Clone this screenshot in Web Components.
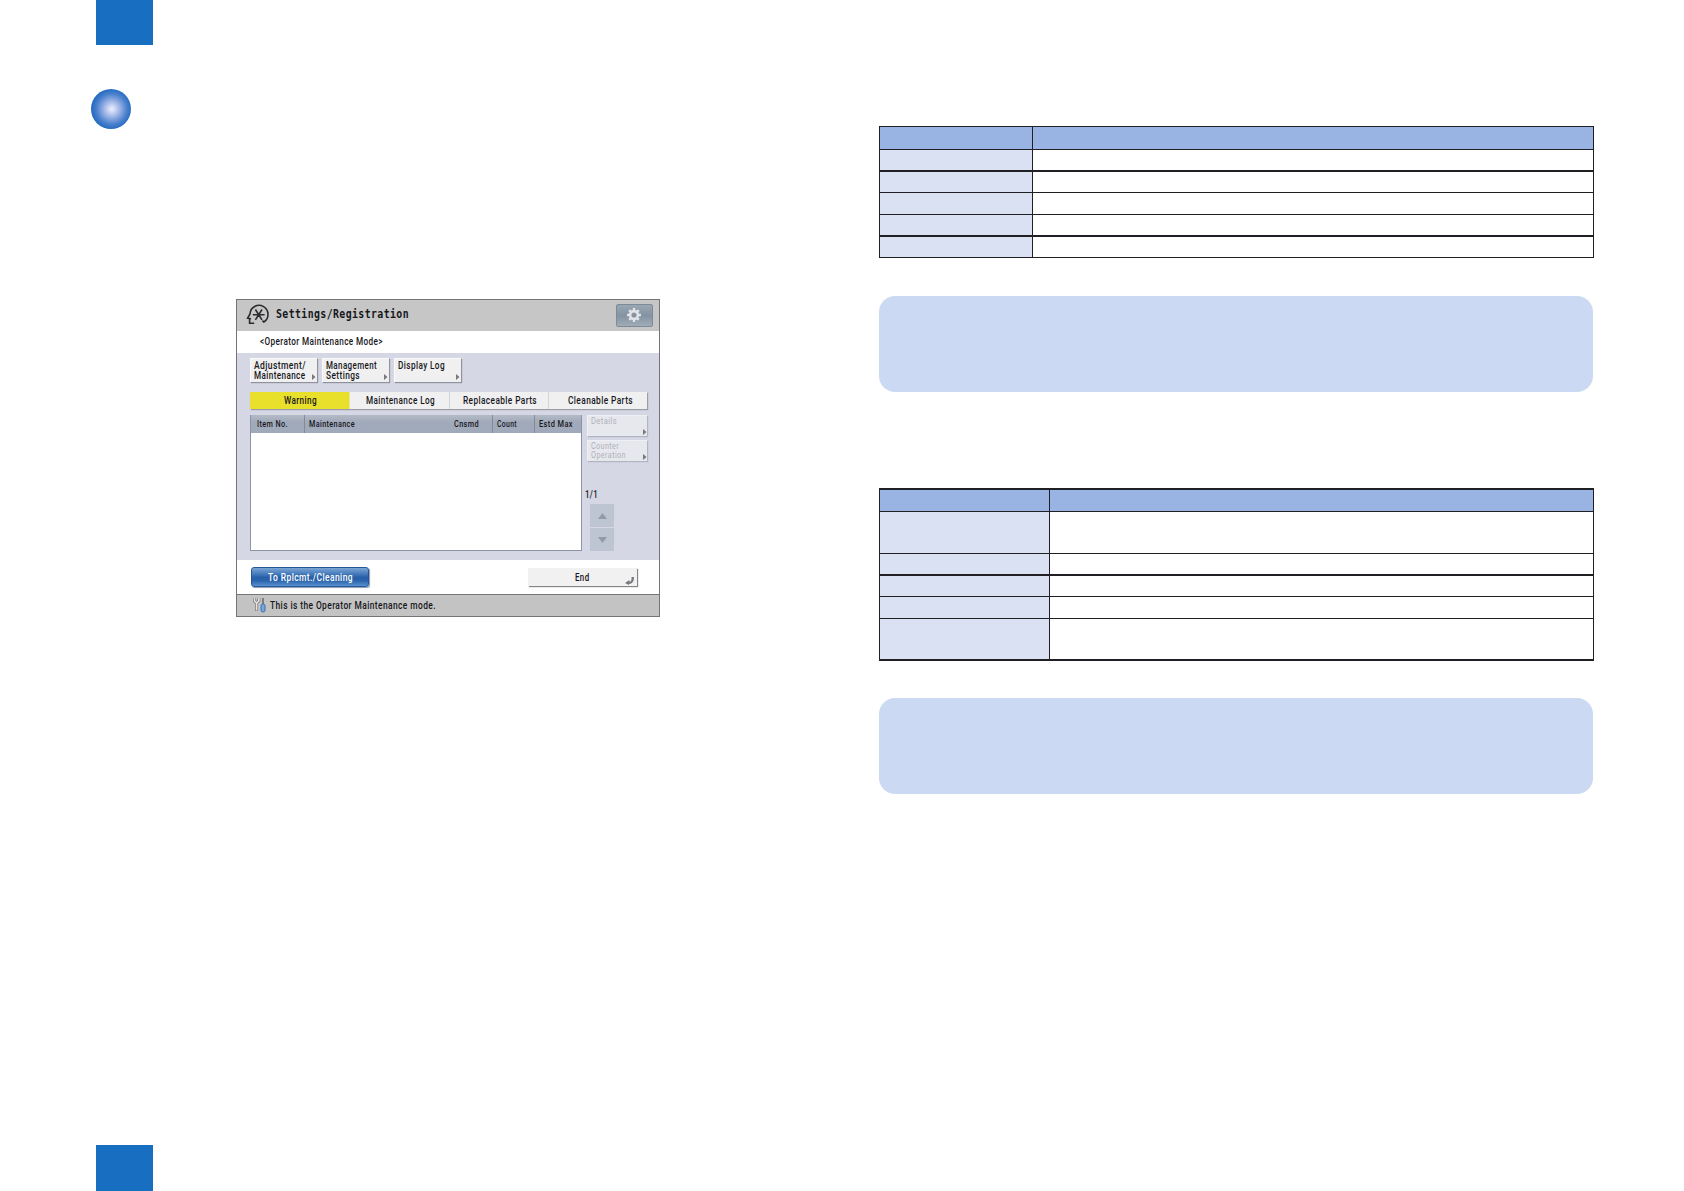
<!DOCTYPE html>
<html lang="en">
<head>
<meta charset="UTF-8">
<title>Operator Maintenance Mode</title>
<style>
    body {
        margin: 0;
        background: #fff;
        font-family: Roboto, "Liberation Sans", sans-serif;
    }
</style>
</head>
<body>
<manual-page>
    <page-bullet slot="left"></page-bullet>
    <device-screen slot="left"></device-screen>

    <item-table slot="right" style="margin-top:126px" label-width="152" rows="1,22 1,20 2,20 1,21 1,20 2,20" end="1"></item-table>
    <note-box slot="right" style="margin-top:38px"></note-box>
    <item-table slot="right" style="margin-top:96px" label-width="169" rows="2,21 1,41 1,20 2,20 1,21 1,40" end="2"></item-table>
    <note-box slot="right" style="margin-top:37px"></note-box>
</manual-page>

<script>
class ManualPage extends HTMLElement {
    constructor() {
        super();
        this.attachShadow({ mode: 'open' }).innerHTML = `
            <style>
                :host {
                    display: grid;
                    grid-template-columns: 879px 715px;
                    width: 1684px;
                    height: 1191px;
                    overflow: hidden;
                }
                .left { display: flex; flex-direction: column; align-items: flex-start; }
                .mark { width: 57px; height: 45px; margin-left: 96px; background: #186fc1; }
                .bottom { height: 46px; margin-top: auto; }
            </style>
            <div class="left">
                <div class="mark"></div>
                <slot name="left"></slot>
                <div class="mark bottom"></div>
            </div>
            <div><slot name="right"></slot></div>
        `;
    }
}

class PageBullet extends HTMLElement {
    constructor() {
        super();
        this.attachShadow({ mode: 'open' }).innerHTML = `
            <style>
                :host {
                    display: block;
                    width: 40px;
                    height: 40px;
                    margin: 44px 0 0 91px;
                    border-radius: 50%;
                    background: radial-gradient(circle 20px at 52% 50%, #eef0fb 0%, #c9d2f2 20%, #8aa8e0 48%, #4a80cd 76%, #256cc0 100%);
                }
            </style>
        `;
    }
}

// rows is a list of "line thickness,cell height" pairs, end is the closing line
class ItemTable extends HTMLElement {
    constructor() {
        super();
        this.attachShadow({ mode: 'open' });
    }

    connectedCallback() {
        const rows = this.getAttribute('rows').split(' ').map(row => {
            const [line, height] = row.split(',');
            return `<div class="row" style="border-top-width:${line}px;height:${height}px"><i></i><b></b></div>`;
        });
        this.shadowRoot.innerHTML = `
            <style>
                :host {
                    display: block;
                    box-sizing: border-box;
                    width: 715px;
                    border: 0 solid #1f1f24;
                    border-bottom-width: ${this.getAttribute('end')}px;
                }
                .row { display: flex; border: 0 solid #1f1f24; border-left-width: 1px; border-right-width: 1px; }
                i { width: ${this.getAttribute('label-width')}px; background: #d9e1f3; border-right: 1px solid #1f1f24; }
                b { flex: 1; }
                .row:first-of-type { background: #99b4e2; }
                .row:first-of-type i { background: none; }
            </style>
            ${rows.join('')}
        `;
    }
}

class NoteBox extends HTMLElement {
    constructor() {
        super();
        this.attachShadow({ mode: 'open' }).innerHTML = `
            <style>
                :host { display: block; width: 714px; height: 96px; border-radius: 16px; background: #cbd9f2; }
            </style>
        `;
    }
}

// One line of panel text, condensed to the given width
class FitText extends HTMLElement {
    constructor() {
        super();
        this.attachShadow({ mode: 'open' });
    }

    connectedCallback() {
        const width = this.getAttribute('w');
        const size = this.getAttribute('size') || 10.5;
        const weight = this.getAttribute('weight') || 500;
        this.shadowRoot.innerHTML = `
            <style>
                :host { display: block; flex: none; width: ${width}px; height: 10px; }
                svg { display: block; overflow: visible; }
                text { font-size: ${size}px; font-weight: ${weight}; letter-spacing: .5px; fill: currentColor; }
            </style>
            <svg width="${width}" height="10"><text y="9" textLength="${width}" lengthAdjust="spacingAndGlyphs"></text></svg>
        `;
        this.shadowRoot.querySelector('text').textContent = this.textContent.trim();
    }
}

class PanelButton extends HTMLElement {
    constructor() {
        super();
        this.attachShadow({ mode: 'open' }).innerHTML = `
            <style>
                :host {
                    display: flex;
                    box-sizing: border-box;
                    width: 67px;
                    height: 24px;
                    padding: 1px 0 0 3px;
                    background: #f0f0f1;
                    border: solid #fafafa;
                    border-width: 1px 0 0 1px;
                    box-shadow: 1px 1px 1px #8f929d;
                    color: #17171b;
                }
                :host([disabled]) {
                    width: 60px;
                    height: 21px;
                    padding: 0 0 0 3px;
                    background: #e7e8ee;
                    border-color: #eff0f5;
                    box-shadow: 1px 1px 1px #b2b4c2;
                    color: #b0b0b8;
                }
                .label { display: flex; flex-direction: column; flex: 1; min-width: 0; }
                :host([disabled]) .label { margin-top: -1px; }
                svg { align-self: flex-end; flex: none; margin: 0 1px 2px 0; }
                :host([disabled]) svg { margin: 0 0 1px; }
            </style>
            <div class="label"><slot></slot></div>
            <svg width="4" height="6"><path d="M0 0L3.5 3L0 6Z" fill="#77777c"/></svg>
        `;
    }
}

class PanelTab extends HTMLElement {
    constructor() {
        super();
        this.attachShadow({ mode: 'open' }).innerHTML = `
            <style>
                :host {
                    display: flex;
                    justify-content: center;
                    box-sizing: border-box;
                    padding: 3px 0 0 2px;
                    background: #f0f0f1;
                    border-right: 1px solid #d3d3da;
                    color: #17171b;
                }
                :host(:last-child) { padding-left: 4px; border: 0; }
                :host([active]) { background: #e9e02c; border-color: #e9e5a0; }
            </style>
            <slot></slot>
        `;
    }
}

class DeviceScreen extends HTMLElement {
    constructor() {
        super();
        this.attachShadow({ mode: 'open' }).innerHTML = `
            <style>
                :host {
                    display: flex;
                    flex-direction: column;
                    box-sizing: border-box;
                    width: 424px;
                    height: 318px;
                    margin: 170px 0 0 236px;
                    border: 1px solid #737378;
                    background: #fff;
                    color: #17171b;
                }
                header { display: flex; height: 31px; background: #c6c6c6; }
                header .logo { margin: 4px 0 0 9px; }
                header fit-text { margin: 9px 0 0 7px; font-family: "DejaVu Sans Mono", monospace; }
                .gear {
                    display: flex;
                    align-items: center;
                    justify-content: center;
                    box-sizing: border-box;
                    width: 37px;
                    height: 23px;
                    margin: 4px 6px 0 auto;
                    padding: 0 1px 1px 0;
                    border: 1px solid #7c8b9a;
                    border-radius: 2px;
                    background: linear-gradient(#9aa7b3, #8493a2 50%, #a0acb7);
                }
                .mode { height: 22px; }
                .mode fit-text { margin: 5px 0 0 23px; }
                .body { display: flex; flex-direction: column; box-sizing: border-box; height: 207px; padding: 5px 12px 9px 13px; background: #d5d7e5; }
                .actions { display: flex; gap: 5px; }
                .tabs { display: grid; grid-template-columns: 100px 100px 99px 98px; width: 397px; height: 17px; margin-top: 10px; box-shadow: 1px 1px 1px #9a9ca8; }
                .main { display: flex; margin-top: 6px; }
                .list { display: flex; flex-direction: column; box-sizing: border-box; width: 332px; height: 136px; border: 1px solid #8a94a4; border-width: 0 1px 1px; background: #fff; }
                .head { display: grid; grid-template-columns: 53px 188px 42px 1fr; height: 18px; background: linear-gradient(#b3bac7, #a1aaba 40%, #a1aaba); }
                .head div { padding: 3px 0 0 4px; border-left: 1px solid #818b9d; }
                .head div:first-child { padding-left: 5.5px; border: 0; }
                .maint { display: flex; justify-content: space-between; }
                .maint fit-text:last-child { margin-right: 13px; }
                .side { display: flex; flex-direction: column; width: 60px; margin-left: 5px; }
                .side panel-button + panel-button { margin-top: 4px; }
                .page { margin: 28px 0 0 -2px; }
                .scroll { display: flex; flex-direction: column; gap: 1px; width: 24px; margin: 5px 0 0 3px; }
                .scroll div { display: flex; align-items: center; justify-content: center; height: 23px; background: #bcc5d1; }
                .bottom { display: flex; height: 34px; }
                .primary {
                    display: flex;
                    justify-content: center;
                    box-sizing: border-box;
                    width: 118px;
                    height: 20px;
                    margin: 7px 0 0 14px;
                    padding: 4px 0 0 1px;
                    border: 1px solid #25569a;
                    border-radius: 3px;
                    background: linear-gradient(#7ca5d3, #4a7fbe 30%, #285fa7 52%, #2a64ae 70%, #5791cd);
                    box-shadow: 1px 1px 1px #8c9bb2;
                    color: #fff;
                }
                .end { display: flex; width: 109px; height: 18px; margin: 8px 22px 0 auto; background: #f1f1f2; box-shadow: 1px 1px 1px #85858a; }
                .end fit-text { margin: 4px 0 0 47px; }
                .end svg { margin: 9px 3px 0 auto; }
                footer { display: flex; flex: 1; border-top: 1px solid #77777b; background: #c3c3c3; }
                footer svg { margin: 2px 0 0 16px; }
                footer fit-text { margin: 5px 0 0 4px; }
            </style>
            <header>
                <svg class="logo" width="23" height="22" fill="none" stroke="#2b2b2f" stroke-width="1.6">
                    <path d="M5 14.8L1.6 14.2L4 10A9 9 0 1 1 17.8 18L16.4 16.6M3.6 15V19.2H8.2M6.8 10.7H18.6M9.4 5.5L16 15.9M16 5.5L9.4 15.9"/>
                </svg>
                <fit-text w="133" size="12.8" weight="700">Settings/Registration</fit-text>
                <div class="gear">
                    <svg width="14" height="14" viewBox="-7 -7 14 14">
                        <circle r="3.9" fill="none" stroke="#e2e4e8" stroke-width="2.6"/>
                        <path d="M0-7V-4M0 7V4M-7 0H-4M7 0H4M-4.8-4.8L-3-3M4.8 4.8L3 3M-4.8 4.8L-3 3M4.8-4.8L3-3" stroke="#e2e4e8" stroke-width="2.4"/>
                    </svg>
                </div>
            </header>
            <div class="mode"><fit-text w="123" size="10.8">&lt;Operator Maintenance Mode&gt;</fit-text></div>
            <div class="body">
                <div class="actions">
                    <panel-button><fit-text w="52">Adjustment/</fit-text><fit-text w="51.5">Maintenance</fit-text></panel-button>
                    <panel-button><fit-text w="51">Management</fit-text><fit-text w="34">Settings</fit-text></panel-button>
                    <panel-button><fit-text w="47">Display Log</fit-text></panel-button>
                </div>
                <div class="tabs">
                    <panel-tab active><fit-text w="33">Warning</fit-text></panel-tab>
                    <panel-tab><fit-text w="69">Maintenance Log</fit-text></panel-tab>
                    <panel-tab><fit-text w="74">Replaceable Parts</fit-text></panel-tab>
                    <panel-tab><fit-text w="65">Cleanable Parts</fit-text></panel-tab>
                </div>
                <div class="main">
                    <div class="list">
                        <div class="head">
                            <div><fit-text w="31" size="9">Item No.</fit-text></div>
                            <div class="maint"><fit-text w="46" size="9">Maintenance</fit-text><fit-text w="25" size="9">Cnsmd</fit-text></div>
                            <div><fit-text w="20" size="9">Count</fit-text></div>
                            <div><fit-text w="34" size="9">Estd Max</fit-text></div>
                        </div>
                    </div>
                    <div class="side">
                        <panel-button disabled><fit-text w="26" size="9.5" weight="400">Details</fit-text></panel-button>
                        <panel-button disabled><fit-text w="28" size="9.5" weight="400">Counter</fit-text><fit-text w="35" size="9.5" weight="400" style="margin-top:-1px">Operation</fit-text></panel-button>
                        <fit-text class="page" w="13">1/1</fit-text>
                        <div class="scroll">
                            <div><svg width="9" height="6"><path d="M0 6L4.5 0L9 6Z" fill="#929ba7"/></svg></div>
                            <div><svg width="9" height="6"><path d="M0 0L4.5 6L9 0Z" fill="#929ba7"/></svg></div>
                        </div>
                    </div>
                </div>
            </div>
            <div class="bottom">
                <div class="primary"><fit-text w="85">To Rplcmt./Cleaning</fit-text></div>
                <div class="end">
                    <fit-text w="14.5">End</fit-text>
                    <svg width="9" height="8"><path d="M6.5 0H9Q9 7 4 7V8L0 6L4.5 3V5Q7 4.5 6.5 0Z" fill="#77777c"/></svg>
                </div>
            </div>
            <footer>
                <svg width="13" height="16" fill="none">
                    <path d="M1.5 1V4L3.6 6L5.8 4V1M3.6 6V14" stroke="#77777c" stroke-width="3"/>
                    <path d="M1.5 1V4L3.6 6L5.8 4V1M3.6 6V13.5" stroke="#e4e4e4" stroke-width="1.6"/>
                    <path d="M10 1V8" stroke="#66666c" stroke-width="1.5"/>
                    <rect x="8" y="7" width="4" height="8" rx="1.8" fill="#72a8dc" stroke="#3c73b0"/>
                </svg>
                <fit-text w="166">This is the Operator Maintenance mode.</fit-text>
            </footer>
        `;
    }
}

customElements.define('fit-text', FitText);
customElements.define('panel-button', PanelButton);
customElements.define('panel-tab', PanelTab);
customElements.define('device-screen', DeviceScreen);
customElements.define('page-bullet', PageBullet);
customElements.define('item-table', ItemTable);
customElements.define('note-box', NoteBox);
customElements.define('manual-page', ManualPage);
</script>
</body>
</html>
